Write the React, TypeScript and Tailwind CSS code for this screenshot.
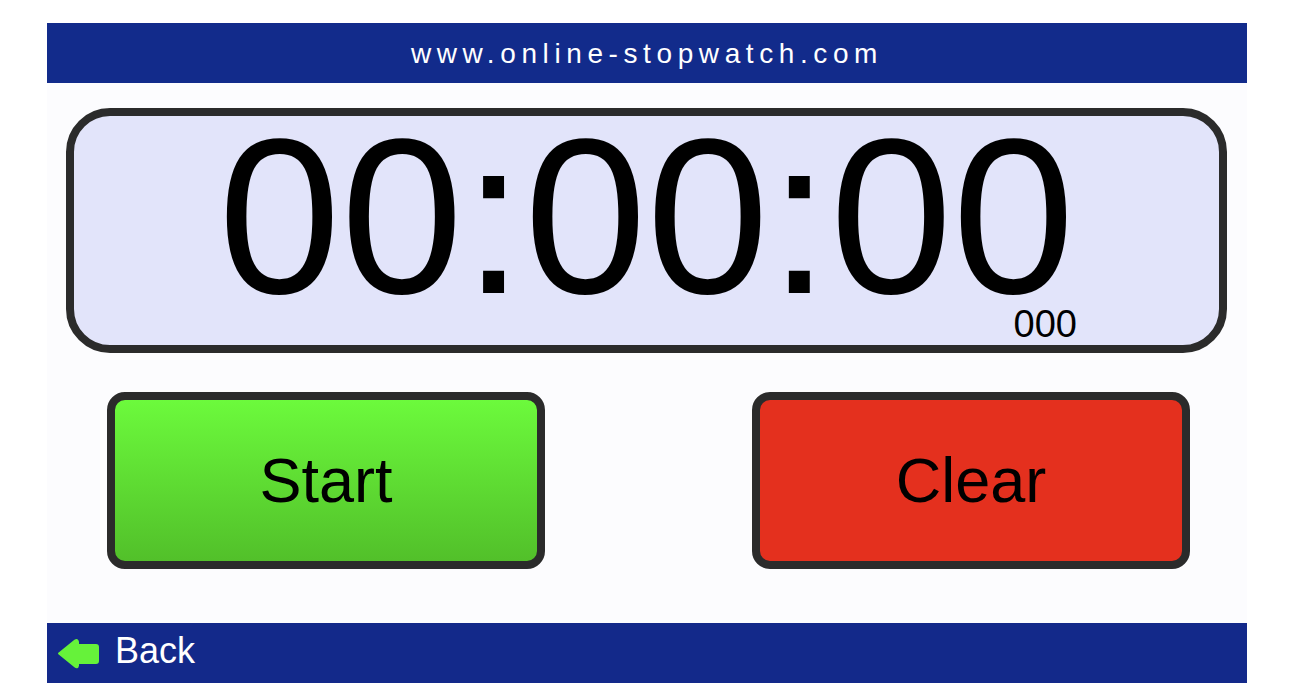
import React from 'react';

const font = { fontFamily: '"Liberation Sans", Arial, sans-serif' };

// Left-pointing arrow on the back link
const BackArrow = () => (
  <svg width="42" height="31" viewBox="0 0 42 31" fill="none">
    <path
      d="M2 15.5 L18 2.5 Q20.5 1 21 4 L21 7 L39 7 Q41 7 41 9 L41 23 Q41 25 39 25 L21 25 L21 27.5 Q20.5 30.5 18 28.5 Z"
      fill="#66f23a"
      stroke="#66f23a"
      strokeWidth="2"
      strokeLinejoin="round"
    />
  </svg>
);

const Button: React.FC<{ label: string; className: string }> = ({ label, className }) => (
  <button
    className={`w-[438px] h-[177px] border-[8px] border-[#2b2b2b] rounded-[18px] flex items-center justify-center text-[63px] text-black leading-none ${className}`}
    style={font}
  >
    {label}
  </button>
);

export default function App() {
  return (
    <div className="min-h-[692px] bg-white pt-[23px] pl-[47px]" style={font}>
      <div className="w-[1200px]">
        <header className="h-[60px] bg-[#122b8b] flex items-center justify-center">
          <span className="text-white text-[28px] tracking-[0.2em] pt-[2px]">
            www.online-stopwatch.com
          </span>
        </header>

        <main className="h-[540px] bg-[#fcfcfe] pt-[25px]">
          <div className="ml-[19px] w-[1161px] h-[245px] border-[8px] border-[#2b2b2b] rounded-[44px] bg-[#e2e4fa] relative flex justify-center">
            <div className="text-[220px] leading-[0.78] text-black mt-[16px] h-[172px]">00:00:00</div>
            <span className="absolute right-[142px] bottom-[6px] text-[38px] leading-[0.8] text-black">
              000
            </span>
          </div>

          <div className="flex pl-[60px] gap-[207px] mt-[39px]">
            <Button label="Start" className="bg-gradient-to-b from-[#6cfa3c] to-[#52c02a]" />
            <Button label="Clear" className="bg-[#e4301e]" />
          </div>
        </main>

        <footer className="h-[60px] bg-[#13298a] flex items-center pl-[10px] gap-[16px]">
          <BackArrow />
          <span className="text-white text-[36px] leading-none -mt-[4px]">Back</span>
        </footer>
      </div>
    </div>
  );
}
